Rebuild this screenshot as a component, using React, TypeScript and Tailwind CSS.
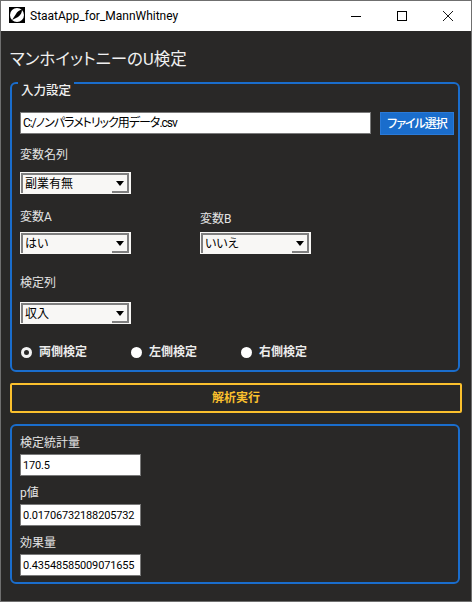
const base = "font-['Roboto','Noto_Sans_CJK_JP',sans-serif] [font-feature-settings:'palt']"

function Label({ children, className = '' }: { children: React.ReactNode; className?: string }) {
  return <div className={`text-[12px] leading-[16px] text-[#e4e4e4] ${className}`}>{children}</div>
}

function Combo({ value }: { value: string }) {
  return (
    <div className="flex h-[22px] w-[111px] items-stretch bg-[#f8f7f5] pb-[1px] pl-[1px] pr-[2px] pt-[1px]">
      <div className="flex flex-1 items-center justify-between border-l-[2px] border-t-[2px] border-l-[#7f7f7f] border-t-[#7f7f7f] pl-[2px]">
        <span className="text-[12px] leading-none text-black">{value}</span>
        <span className="flex h-[18px] w-[17px] items-center justify-center border-b-[2px] border-r-[2px] border-b-[#7f7f7f] border-r-[#7f7f7f] bg-[#f8f7f5]">
          <svg width="8" height="5" viewBox="0 0 8 5">
            <path d="M0 0h8L4 5z" fill="#000" />
          </svg>
        </span>
      </div>
    </div>
  )
}

function Radio({ label, checked }: { label: string; checked?: boolean }) {
  return (
    <div className="flex h-[12px] items-center gap-[7px]">
      {checked ? (
        <span className="h-[11px] w-[11px] rounded-full border-[3px] border-[#f2f2f2] bg-[#292827]" />
      ) : (
        <span className="h-[11px] w-[11px] rounded-full bg-white" />
      )}
      <span className="text-[12px] font-bold leading-none text-[#ececec]">{label}</span>
    </div>
  )
}

function ValueBox({ value }: { value: string }) {
  return (
    <div className="flex h-[22px] w-[121px] items-center overflow-hidden whitespace-nowrap border-[1px] border-[#7a7a7a] bg-white pl-[2px] text-[11px] leading-none tracking-[-0.15px] text-black">
      {value}
    </div>
  )
}

export default function App() {
  return (
    <div className={`flex h-[602px] w-[472px] flex-col overflow-hidden border-[1px] border-[#6f6f6f] bg-[#292827] ${base}`}>
      {/* title bar */}
      <div className="flex h-[30px] items-center bg-white">
        <svg className="ml-[8px] mt-[-2px]" width="16" height="16" viewBox="0 0 16 16">
          <rect width="16" height="16" fill="#000" />
          <circle cx="8" cy="8" r="7" fill="#fff" />
          <path d="M3 13 7 7c1-2 3-4 6-4.5C13 5 12 8 9 10 7 11 5 12 3 13z" fill="#000" />
        </svg>
        <span className="ml-[5px] text-[12px] leading-none text-black">StaatApp_for_MannWhitney</span>
        <div className="ml-auto flex items-center">
          <svg className="mr-[36px]" width="10" height="10" viewBox="0 0 10 10">
            <path d="M0 5.5h10" stroke="#000" />
          </svg>
          <svg className="mr-[36px]" width="10" height="10" viewBox="0 0 10 10">
            <rect x=".5" y=".5" width="9" height="9" fill="none" stroke="#000" />
          </svg>
          <svg className="mr-[18px]" width="10" height="10" viewBox="0 0 10 10">
            <path d="M0 0l10 10M10 0 0 10" stroke="#000" strokeWidth=".9" />
          </svg>
        </div>
      </div>

      <div className="flex flex-1 flex-col pl-[9px]">
        <h1 className="mt-[17px] text-[16.5px] font-normal leading-[24px] text-[#f0f0f0]">マンホイットニーのU検定</h1>

        {/* input frame */}
        <div className="relative mt-[10px] h-[290px] w-[450px] rounded-[6px] border-[2px] border-[#1a6dcc] pl-[8px]">
          <span className="absolute left-[6px] top-[-2px] bg-[#292827] px-[3px] text-[12.5px] font-medium leading-[18px] text-[#f0f0f0]">
            入力設定
          </span>
          <div className="mt-[28px] flex gap-[9px]">
            <div className="flex h-[22px] w-[351px] items-center border-[1px] border-[#7a7a7a] bg-white pl-[2px] text-[12px] leading-none tracking-[-1px] text-black">
              C:/ノンパラメトリック用データ.csv
            </div>
            <div className="flex h-[23px] w-[74px] items-center justify-center border-[1px] border-[#2a7ad8] bg-[#1a6dcc] text-[12px] font-medium leading-none tracking-[-1px] text-white">
              ファイル選択
            </div>
          </div>

          <Label className="mt-[12px]">変数名列</Label>
          <div className="mt-[9px]">
            <Combo value="副業有無" />
          </div>

          <div className="mt-[15px] flex gap-[69px]">
            <div>
              <Label>変数A</Label>
              <div className="mt-[7px]">
                <Combo value="はい" />
              </div>
            </div>
            <div>
              <Label className="mt-[2px]">変数B</Label>
              <div className="mt-[5px]">
                <Combo value="いいえ" />
              </div>
            </div>
          </div>

          <Label className="mt-[21px]">検定列</Label>
          <div className="mt-[11px]">
            <Combo value="収入" />
          </div>

          <div className="mt-[22px] flex pl-[1px]">
            <div className="w-[110px]">
              <Radio label="両側検定" checked />
            </div>
            <div className="w-[110px]">
              <Radio label="左側検定" />
            </div>
            <Radio label="右側検定" />
          </div>
        </div>

        {/* run button */}
        <div className="mt-[11px] flex h-[30px] w-[452px] items-center justify-center rounded-[2px] border-[2px] border-[#fbc02d] text-[12px] font-bold leading-none text-[#fbc02d]">
          解析実行
        </div>

        {/* results frame */}
        <div className="mt-[11px] h-[160px] w-[450px] rounded-[6px] border-[2px] border-[#1a6dcc] pl-[8px] pt-[9px]">
          <Label>検定統計量</Label>
          <div className="mt-[3px]">
            <ValueBox value="170.5" />
          </div>
          <Label className="mt-[9px]">p値</Label>
          <div className="mt-[3px]">
            <ValueBox value="0.01706732188205732" />
          </div>
          <Label className="mt-[9px]">効果量</Label>
          <div className="mt-[3px]">
            <ValueBox value="0.43548585009071655" />
          </div>
        </div>
      </div>
    </div>
  )
}
